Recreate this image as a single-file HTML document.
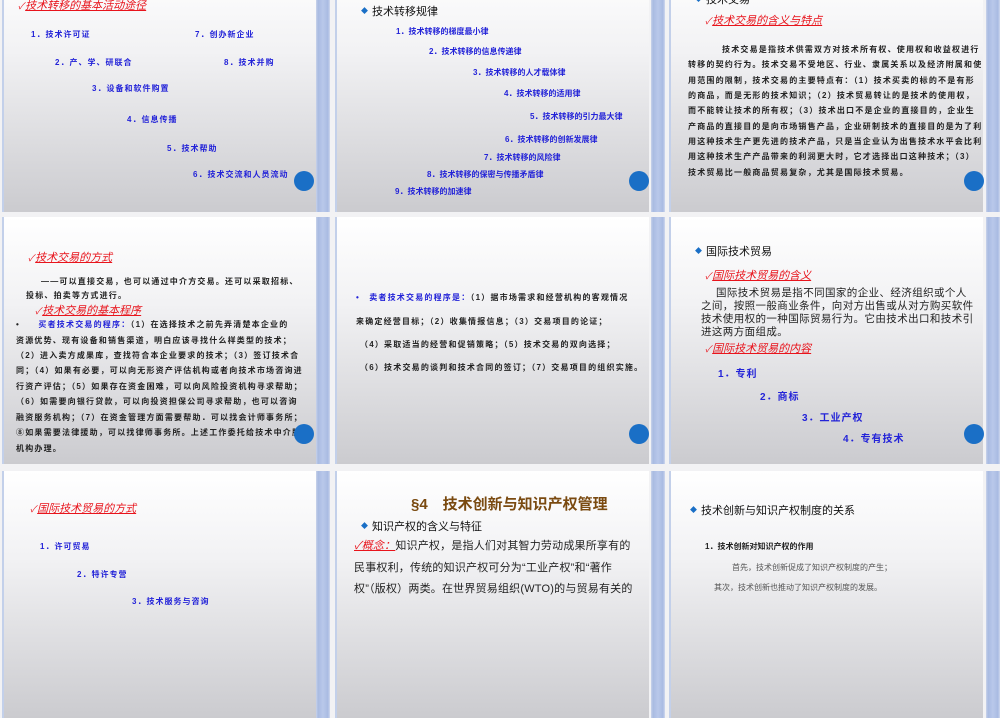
<!DOCTYPE html>
<html><head><meta charset="utf-8"><style>
*{margin:0;padding:0;box-sizing:border-box}
body{width:1000px;height:600px;overflow:hidden;background:#f2f2f4;position:relative;font-family:"Liberation Sans","Noto Sans CJK SC",sans-serif}
.s{position:absolute;width:314px;height:247px;background:linear-gradient(#ffffff 0%,#f2f2f4 35%,#cbcbcf 100%);border-left:2px solid #c3d0ea;overflow:hidden}
.st{position:absolute;width:14px;height:247px;background:linear-gradient(90deg,#c9d3ea 0,#a9bbe2 15%,#b9c8ea 50%,#a9bbe2 85%,#cfd8ee 100%)}
.c{position:absolute;width:20px;height:20px;border-radius:50%;background:#1a6fc6}
.t{position:absolute;white-space:nowrap;line-height:1}
.b{color:#2323d8;font-weight:bold;font-size:8px;letter-spacing:1px}
.r{color:#e8141c;font-style:italic;text-decoration:underline;font-size:11px}
.r:before{content:"✓";font-size:9px;text-decoration:none;display:inline-block;margin-right:1px}
.h{font-size:11px;color:#111}
.h:before{content:"◆";color:#1a6fc6;font-size:7px;margin-right:4px;vertical-align:2px}
.p{font-size:8px;color:#222;font-weight:bold;letter-spacing:1.2px}
.q{font-size:10.5px;color:#222;letter-spacing:0.4px}
.w{font-size:11px;color:#222;letter-spacing:0.2px}
</style></head><body>
<div class="s" style="left:2px;top:-35px"></div><div class="st" style="left:316px;top:-35px"></div>
<div class="s" style="left:335px;top:-35px"></div><div class="st" style="left:651px;top:-35px"></div>
<div class="s" style="left:669px;top:-35px"></div><div class="st" style="left:986px;top:-35px"></div>
<div class="s" style="left:2px;top:217px"></div><div class="st" style="left:316px;top:217px"></div>
<div class="s" style="left:335px;top:217px"></div><div class="st" style="left:651px;top:217px"></div>
<div class="s" style="left:669px;top:217px"></div><div class="st" style="left:986px;top:217px"></div>
<div class="s" style="left:2px;top:471px"></div><div class="st" style="left:316px;top:471px"></div>
<div class="s" style="left:335px;top:471px"></div><div class="st" style="left:651px;top:471px"></div>
<div class="s" style="left:669px;top:471px"></div><div class="st" style="left:986px;top:471px"></div>

<div class="t r" style="left:18px;top:1px">技术转移的基本活动途径</div>
<div class="t b" style="left:31px;top:31px">1．技术许可证</div>
<div class="t b" style="left:195px;top:31px">7．创办新企业</div>
<div class="t b" style="left:55px;top:59px">2．产、学、研联合</div>
<div class="t b" style="left:224px;top:59px">8．技术并购</div>
<div class="t b" style="left:92px;top:85px">3．设备和软件购置</div>
<div class="t b" style="left:127px;top:116px">4．信息传播</div>
<div class="t b" style="left:167px;top:145px">5．技术帮助</div>
<div class="t b" style="left:193px;top:171px">6．技术交流和人员流动</div>
<div class="c" style="left:294px;top:171px"></div>

<div class="t h" style="left:361px;top:7px">技术转移规律</div>
<div class="t b" style="left:396px;top:28px;letter-spacing:0">1．技术转移的梯度最小律</div>
<div class="t b" style="left:429px;top:48px;letter-spacing:0">2．技术转移的信息传递律</div>
<div class="t b" style="left:473px;top:69px;letter-spacing:0">3．技术转移的人才载体律</div>
<div class="t b" style="left:504px;top:90px;letter-spacing:0">4．技术转移的适用律</div>
<div class="t b" style="left:530px;top:113px;letter-spacing:0">5．技术转移的引力最大律</div>
<div class="t b" style="left:505px;top:136px;letter-spacing:0">6．技术转移的创新发展律</div>
<div class="t b" style="left:484px;top:154px;letter-spacing:0">7．技术转移的风险律</div>
<div class="t b" style="left:427px;top:171px;letter-spacing:0">8．技术转移的保密与传播矛盾律</div>
<div class="t b" style="left:395px;top:188px;letter-spacing:0">9．技术转移的加速律</div>
<div class="c" style="left:629px;top:171px"></div>

<div class="t h" style="left:695px;top:-5px">技术交易</div>
<div class="t r" style="left:705px;top:16px">技术交易的含义与特点</div>
<div class="t p" style="left:722px;top:46px">技术交易是指技术供需双方对技术所有权、使用权和收益权进行</div>
<div class="t p" style="left:688px;top:61px">转移的契约行为。技术交易不受地区、行业、隶属关系以及经济附属和使</div>
<div class="t p" style="left:688px;top:77px">用范围的限制，技术交易的主要特点有：（1）技术买卖的标的不是有形</div>
<div class="t p" style="left:688px;top:92px">的商品，而是无形的技术知识；（2）技术贸易转让的是技术的使用权，</div>
<div class="t p" style="left:688px;top:107px">而不能转让技术的所有权；（3）技术出口不是企业的直接目的，企业生</div>
<div class="t p" style="left:688px;top:123px">产商品的直接目的是向市场销售产品，企业研制技术的直接目的是为了利</div>
<div class="t p" style="left:688px;top:138px">用这种技术生产更先进的技术产品，只是当企业认为出售技术水平会比利</div>
<div class="t p" style="left:688px;top:153px">用这种技术生产产品带来的利润更大时，它才选择出口这种技术；（3）</div>
<div class="t p" style="left:688px;top:169px">技术贸易比一般商品贸易复杂，尤其是国际技术贸易。</div>
<div class="c" style="left:964px;top:171px"></div>

<div class="t r" style="left:28px;top:253px">技术交易的方式</div>
<div class="t p" style="left:41px;top:278px">——可以直接交易，也可以通过中介方交易。还可以采取招标、</div>
<div class="t p" style="left:26px;top:292px">投标、拍卖等方式进行。</div>
<div class="t r" style="left:35px;top:306px">技术交易的基本程序</div>
<div class="t p" style="left:16px;top:321px">•　　<span style="color:#2323d8">买者技术交易的程序：</span>（1）在选择技术之前先弄清楚本企业的</div>
<div class="t p" style="left:16px;top:337px">资源优势、现有设备和销售渠道，明白应该寻找什么样类型的技术；</div>
<div class="t p" style="left:16px;top:352px">（2）进入卖方成果库，查找符合本企业要求的技术；（3）签订技术合</div>
<div class="t p" style="left:16px;top:367px">同；（4）如果有必要，可以向无形资产评估机构或者向技术市场咨询进</div>
<div class="t p" style="left:16px;top:383px">行资产评估；（5）如果存在资金困难，可以向风险投资机构寻求帮助；</div>
<div class="t p" style="left:16px;top:398px">（6）如需要向银行贷款，可以向投资担保公司寻求帮助，也可以咨询</div>
<div class="t p" style="left:16px;top:414px">融资服务机构；（7）在资金管理方面需要帮助．可以找会计师事务所；</div>
<div class="t p" style="left:16px;top:429px">⑧如果需要法律援助，可以找律师事务所。上述工作委托给技术中介服务</div>
<div class="t p" style="left:16px;top:445px">机构办理。</div>
<div class="c" style="left:294px;top:424px"></div>

<div class="t p" style="left:356px;top:294px"><span style="color:#2323d8">•　卖者技术交易的程序是：</span>（1）据市场需求和经营机构的客观情况</div>
<div class="t p" style="left:356px;top:318px">来确定经营目标；（2）收集情报信息；（3）交易项目的论证；</div>
<div class="t p" style="left:360px;top:341px">（4）采取适当的经营和促销策略；（5）技术交易的双向选择；</div>
<div class="t p" style="left:360px;top:364px">（6）技术交易的谈判和技术合同的签订；（7）交易项目的组织实施。</div>
<div class="c" style="left:629px;top:424px"></div>

<div class="t h" style="left:695px;top:247px">国际技术贸易</div>
<div class="t r" style="left:705px;top:271px">国际技术贸易的含义</div>
<div class="t q" style="left:716px;top:288px">国际技术贸易是指不同国家的企业、经济组织或个人</div>
<div class="t q" style="left:701px;top:301px">之间，按照一般商业条件，向对方出售或从对方购买软件</div>
<div class="t q" style="left:701px;top:314px">技术使用权的一种国际贸易行为。它由技术出口和技术引</div>
<div class="t q" style="left:701px;top:327px">进这两方面组成。</div>
<div class="t r" style="left:705px;top:344px">国际技术贸易的内容</div>
<div class="t b" style="left:718px;top:370px;font-size:10px">1．专利</div>
<div class="t b" style="left:760px;top:393px;font-size:10px">2．商标</div>
<div class="t b" style="left:802px;top:414px;font-size:10px">3．工业产权</div>
<div class="t b" style="left:843px;top:435px;font-size:10px">4．专有技术</div>
<div class="c" style="left:964px;top:424px"></div>

<div class="t r" style="left:30px;top:504px">国际技术贸易的方式</div>
<div class="t b" style="left:40px;top:543px">1．许可贸易</div>
<div class="t b" style="left:77px;top:571px">2．特许专营</div>
<div class="t b" style="left:132px;top:598px">3．技术服务与咨询</div>

<div class="t" style="left:411px;top:497px;font-size:15px;font-weight:bold;color:#7a4a10">§4　技术创新与知识产权管理</div>
<div class="t h" style="left:361px;top:522px">知识产权的含义与特征</div>
<div class="t w" style="left:354px;top:541px"><span style="color:#e8141c;font-style:italic;text-decoration:underline">✓概念：</span>知识产权，是指人们对其智力劳动成果所享有的</div>
<div class="t w" style="left:354px;top:563px">民事权利，传统的知识产权可分为“工业产权”和“著作</div>
<div class="t w" style="left:354px;top:584px">权”（版权）两类。在世界贸易组织(WTO)的与贸易有关的</div>

<div class="t h" style="left:690px;top:506px">技术创新与知识产权制度的关系</div>
<div class="t" style="left:705px;top:543px;font-size:8px;font-weight:bold;color:#222">1．技术创新对知识产权的作用</div>
<div class="t" style="left:732px;top:564px;font-size:8px;color:#555">首先，技术创新促成了知识产权制度的产生；</div>
<div class="t" style="left:714px;top:584px;font-size:8px;color:#555">其次，技术创新也推动了知识产权制度的发展。</div>
</body></html>
